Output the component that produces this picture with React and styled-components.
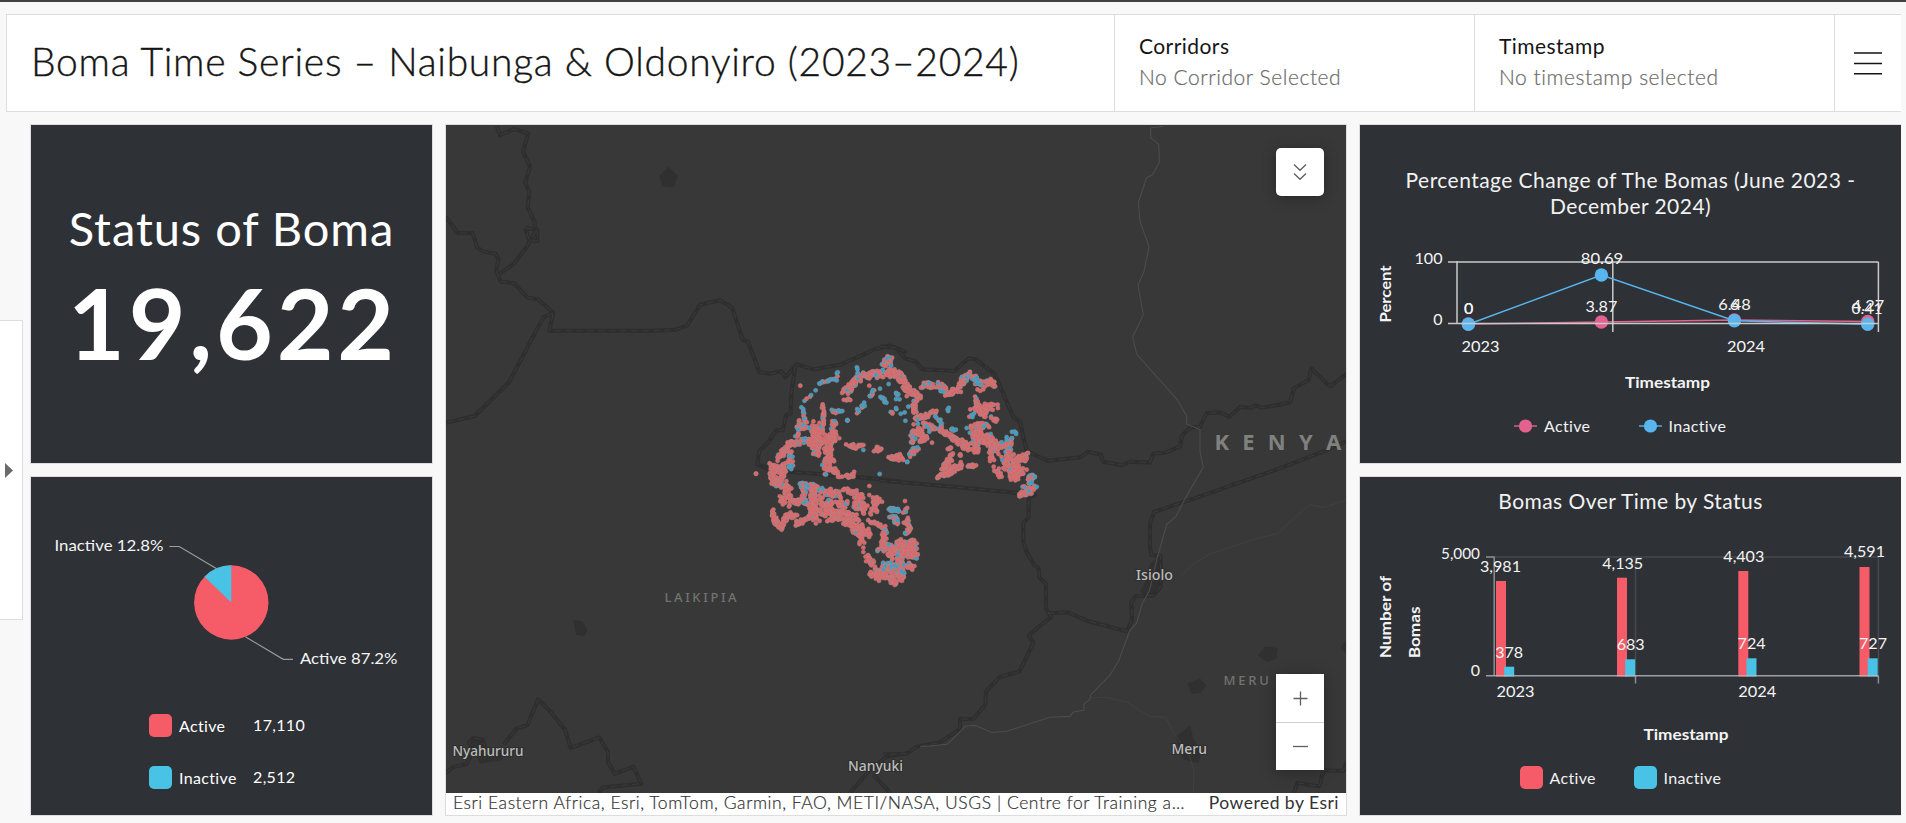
import React from "react";
import styled, { createGlobalStyle } from "styled-components";

const GlobalStyle = createGlobalStyle`
  *, *::before, *::after { box-sizing: border-box; }
  body { margin: 0; overflow: hidden; background: #f8f8f8; }
  svg { display: block; }
`;

const SANS = `Lato, "Open Sans", sans-serif`;
const RED = "#f55c68";
const BLUE = "#48c3e5";
const PINK = "#e3628f";
const SKY = "#58b5ee";

const Page = styled.div`
  height: 823px;
  width: 1906px;
  display: flex;
  flex-direction: column;
  border-top: 2px solid #434141;
  padding: 12px 5px 7px 0;
  font-family: ${SANS};
  background: #f8f8f8;
`;

const Header = styled.header`
  display: flex;
  height: 98px;
  margin-left: 6px;
  background: #fff;
  border: 1px solid #dddddd;
  border-right: 0;
`;

const Title = styled.h1`
  flex: 1;
  margin: 0;
  padding: 21px 0 0 24px;
  font-size: 39px;
  line-height: 50px;
  font-weight: 300;
  letter-spacing: 0.72px;
  white-space: nowrap;
  color: #151515;
  -webkit-text-stroke: 0.35px #151515;
`;

const Selector = styled.div`
  width: 360px;
  padding: 15px 0 0 24px;
  border-left: 1px solid #dddddd;
`;

const SelectorName = styled.div`
  font-size: 21px;
  line-height: 31px;
  color: #151515;
  letter-spacing: 0.45px;
`;

const SelectorValue = styled.div`
  font-size: 21px;
  line-height: 31px;
  font-weight: 300;
  color: #6a6a6a;
  letter-spacing: 0.54px;
  -webkit-text-stroke: 0.2px #6a6a6a;
`;

const MenuButton = styled.button`
  width: 67px;
  padding: 0 0 0 19px;
  border: 0;
  border-left: 1px solid #dddddd;
  background: none;
`;

const Main = styled.main`
  flex: 1;
  display: grid;
  grid-template-columns: 18px 403px 902px 542px;
  column-gap: 12px;
  margin-top: 12px;
  height: 692px;
`;

const DrawerHandle = styled.button`
  width: 23px;
  height: 300px;
  margin-top: 196px;
  padding: 0 0 0 5px;
  border: 1px solid #dddddd;
  border-left: 0;
  background: #fff;
`;

const Column = styled.section`
  display: grid;
  grid-template-rows: 340px 340px;
  row-gap: 12px;
`;

const Panel = styled.article`
  display: flex;
  flex-direction: column;
  background: #2e3136;
  border: 1px solid #dddddd;
  border-right-width: ${(p) => (p.$open ? 0 : "1px")};
  color: #fff;
  overflow: hidden;
`;

const KpiLabel = styled.div`
  margin-top: 73px;
  text-align: center;
  font-size: 47px;
  line-height: 60px;
  letter-spacing: 0.95px;
  white-space: nowrap;
`;

const KpiValue = styled.div`
  margin-top: 5px;
  padding-left: 3px;
  text-align: center;
  font-size: 98px;
  line-height: 118px;
  font-weight: 700;
  letter-spacing: 3.8px;
`;

const PieLegend = styled.div`
  display: grid;
  grid-template-columns: 23px 67px auto;
  grid-auto-rows: 23px;
  column-gap: 7px;
  row-gap: 29px;
  align-items: center;
  margin: 2px 0 0 118px;
  font-size: 16px;
  line-height: 21px;
  letter-spacing: 0.35px;
`;

const LegendValue = styled.span`
  padding-bottom: 3px;
`;

const Swatch = styled.span`
  width: 23px;
  height: 23px;
  border-radius: 5px;
  background: ${(p) => p.$color};
`;

const ChartTitle = styled.h2`
  margin: ${(p) => p.$top} 0 0;
  font-size: 21px;
  line-height: 26px;
  font-weight: 400;
  text-align: center;
  color: #f2f2f2;
  letter-spacing: 0.45px;
`;

const Legend = styled.div`
  display: flex;
  margin: ${(p) => p.$margin};
  font-size: 16px;
  line-height: 23px;
  letter-spacing: 0.35px;
  color: #f2f2f2;
`;

const LegendItem = styled.span`
  display: flex;
  align-items: center;
  gap: 7px;
  width: ${(p) => p.$width};
`;

const MapCard = styled.article`
  position: relative;
  display: flex;
  flex-direction: column;
  border: 1px solid #dddddd;
  background: #fff;
`;

const Attribution = styled.footer`
  display: flex;
  justify-content: space-between;
  height: 22px;
  padding: 0 7px;
  font-size: 17.5px;
  line-height: 20px;
  font-weight: 300;
  color: #323232;
  -webkit-text-stroke: 0.2px #323232;
  white-space: nowrap;
`;

const Sources = styled.span`
  letter-spacing: 0.56px;
`;

const Powered = styled.span`
  font-weight: 400;
  letter-spacing: 0.48px;
  -webkit-text-stroke: 0;
`;

const MapControls = styled.div`
  position: absolute;
  right: 22px;
  top: ${(p) => p.$top};
  display: flex;
  flex-direction: column;
  border-radius: ${(p) => p.$radius || "0"};
  overflow: hidden;
  box-shadow: 0 2px 14px rgba(0, 0, 0, 0.3);
`;

const MapButton = styled.button`
  display: grid;
  place-items: center;
  width: 48px;
  height: 48px;
  padding: 0;
  border: 0;
  background: #fff;
  & + & { border-top: 1px solid #cfcfcf; }
`;

const Plot = styled.svg`
  font-family: ${SANS};
  font-size: 16px;
  fill: #f4f4f4;
  overflow: visible;
  flex: none;
`;

function Label({ x, y, w, anchor = "middle", children, ...rest }) {
  return (
    <text x={x} y={y} textAnchor={anchor} textLength={w} lengthAdjust="spacingAndGlyphs" {...rest}>
      {children}
    </text>
  );
}

/* ---------- basemap ---------- */

const WEST_BORDERS = [
  "170,14 180,34 222,20 265,30 249,70 270,103 256,140 268,160 263,195 284,228 286,250 258,285 220,322 178,343",
  "256,240 292,246 292,270 268,270 256,240",
  "18,216 54,252 98,252 112,285 132,294 166,298 176,310 168,335 182,360 222,364 262,396 294,400 340,430 328,470 636,470 706,468 742,458 780,412 840,402 876,418 908,490 924,494 958,562 990,566 1024,560 1036,574 1052,560 1070,545 1120,556 1200,546 1280,520 1300,512 1350,503 1400,518",
  "340,430 310,440 206,586 104,660 18,675",
  "1066,548 1054,610 1052,654 1038,658 1028,692 1008,692 984,720 958,738 952,768 1000,782 1080,786 1250,796 1380,806",
  "192,1392 230,1357 262,1350 294,1292 330,1318 375,1360 392,1400 478,1377 504,1410 504,1432 524,1458 580,1442 604,1480 490,1488 475,1500",
  "18,1456 40,1443 80,1436 100,1405 86,1388 100,1378 128,1382 136,1400",
  "1230,1500 1290,1450 1340,1420 1400,1412",
  "1300,1460 1350,1500",
];
const EAST_BORDERS = [
  "-30,505 18,508 46,532 76,538 98,556 192,560 236,532 258,534 314,566 370,662 390,674 410,738 472,760 572,752 594,740 632,746 640,762 696,770 720,762 780,764 790,744 826,742 870,728 876,704 900,686 930,684 950,654 990,652 1018,662 1050,640 1082,642 1096,636 1116,642 1200,630 1212,598 1256,580 1264,554 1320,594 1370,566",
  "-30,804 190,818 390,832 434,836 416,842 416,884 400,900 400,940 410,964 432,992 446,1000 448,1020 468,1034 468,1090 484,1108 440,1134 416,1150 430,1166 408,1200 388,1230 330,1242 288,1274 286,1304 250,1336 210,1336 210,1358 150,1388 80,1398 50,1413 -20,1415",
  "472,1100 534,1098 588,1116 710,1140 726,1116 724,1076 736,1062 790,1060 812,1040 812,972 784,970 780,950 780,900 792,874 920,842 1180,774 1310,736 1370,716",
  "1212,1500 1222,1478 1288,1486 1300,1450 1360,1452 1370,1430",
];
const ROADS = [
  "820,14 782,18 782,40 806,54 808,94 788,122 770,128 745,184 750,226 777,282 762,338 744,368 760,434 728,484 740,522 862,624 890,660 890,678 930,690 930,740 940,774 884,846 858,884 830,902 804,970 778,1050 756,1080 740,1122 720,1138 686,1206 660,1238 602,1282 600,1292 582,1302 582,1316 550,1320 540,1330 480,1332 350,1363 306,1366 256,1350 226,1352 172,1392 90,1398",
];
const MINOR_ROADS = [
  "1368,848 1300,864 1258,858 1212,888 1164,922 1106,932 960,968 910,990 872,1018",
  "602,1288 650,1288 710,1298 780,1330 826,1332 856,1372 900,1420 912,1450 910,1500",
];
const LAKES_WEST = [
  "658,125 685,104 714,125 700,150 668,148",
  "400,1114 428,1118 442,1138 432,1151 408,1148",
  "90,1385 120,1378 150,1405 200,1408 185,1428 120,1435",
];
const LAKES_EAST = [
  "1104,1194 1126,1174 1164,1178 1160,1200 1132,1210",
  "892,1256 930,1246 950,1262 932,1278 906,1280",
  "856,1376 900,1350 910,1380 936,1412 925,1434 880,1426",
  "1352,1176 1370,1158 1370,1192",
  "780,990 810,970 812,1050 780,1062 750,1052 765,1030",
];

function Borders({ lines, ...rest }) {
  return (
    <g fill="none" strokeLinejoin="round" {...rest}>
      {lines.map((d) => (
        <polyline key={d} points={d} stroke="#2d2e2d" strokeWidth="4" vectorEffect="non-scaling-stroke" />
      ))}
      {lines.map((d) => (
        <polyline key={d} points={d} stroke="#3b3c3b" strokeWidth="0.9" strokeDasharray="7 4" vectorEffect="non-scaling-stroke" />
      ))}
    </g>
  );
}

/* Boma clusters: [track, spread, dots per 100 units, share of inactive] */
const WEST_CLUSTERS = [
  ["181,137 181,137", 0, 1, 0], ["48,401 48,401", 2, 2, 0],
  ["236,131 262,124 288,118 295,96", 4, 22, 0.7],
  ["195,186 212,168 226,155", 4, 12, 0.5],
  ["182,204 192,225 200,250", 6, 22, 0.6],
  ["172,262 205,258", 7, 40, 0.7], ["180,240 170,290", 5, 30, 0.3],
  ["246,194 250,225 246,280", 4, 26, 0.08],
  ["228,255 232,345", 15, 65, 0.06], ["200,300 240,330", 13, 60, 0.03],
  ["280,244 282,300", 8, 45, 0.1], ["246,285 285,300", 14, 60, 0],
  ["262,300 270,370", 13, 55, 0.05], ["252,370 256,398", 7, 35, 0.35],
  ["265,380 303,406", 9, 45, 0], ["318,410 345,402", 9, 45, 0.08],
  ["195,300 148,315", 10, 45, 0.25], ["155,305 128,340 115,355", 9, 45, 0.12],
  ["150,330 153,385", 8, 40, 0.2],
  ["100,375 102,435", 13, 75, 0], ["128,375 128,425", 11, 65, 0],
  ["105,430 150,445", 8, 50, 0.06], ["178,437 228,437", 8, 55, 0.55],
  ["125,470 125,490", 6, 45, 0.05], ["140,445 148,488", 12, 55, 0.02],
  ["160,482 200,488", 9, 60, 0.12], ["190,445 192,488", 7, 45, 0.35],
  ["222,440 215,530", 10, 65, 0.04], ["240,450 300,462", 12, 55, 0.15],
  ["230,480 230,535", 20, 85, 0.02], ["255,490 275,535", 20, 90, 0.02],
  ["290,490 320,495", 11, 60, 0.02], ["280,520 345,535", 14, 80, 0.02],
  ["320,452 360,468 362,505", 12, 65, 0.03], ["345,490 385,515", 14, 70, 0.05],
  ["98,514 108,550 128,565", 7, 50, 0], ["120,555 150,522 165,530", 8, 50, 0],
  ["165,552 206,536", 7, 45, 0], ["312,550 345,560", 6, 35, 0],
  ["350,565 365,600", 15, 80, 0.02], ["355,560 388,585", 13, 60, 0],
  ["388,438 388,465", 0, 7, 0], ["400,480 420,482", 9, 50, 0], ["405,485 406,514", 7, 45, 0],
  ["388,542 425,560", 4, 32, 0], ["434,562 432,610", 7, 45, 0.2],
  ["412,630 440,628", 5, 35, 0.35], ["430,610 475,640", 13, 70, 0.05],
  ["370,623 370,636", 0, 14, 0], ["380,652 400,672", 9, 50, 0.15],
  ["400,690 405,720", 15, 80, 0.04], ["425,680 470,680", 13, 70, 0.45],
  ["420,700 465,708", 13, 70, 0.15], ["445,715 470,732", 7, 45, 0],
  ["326,316 368,320", 8, 40, 0.02], ["370,330 370,330", 0, 1, 1],
  ["403,330 422,322", 8, 50, 0.02], ["450,352 480,350", 5, 35, 0.2],
  ["419,402 419,402", 0, 1, 1], ["321,242 321,242", 3, 3, 1],
  ["278,214 302,214", 6, 40, 0.6], ["350,216 375,192", 6, 35, 0.9],
  ["388,170 402,150", 4, 32, 0.7], ["388,137 388,137", 0, 1, 0],
  ["420,146 420,146", 0, 1, 1], ["424,168 438,190", 4, 26, 0.9],
  ["450,218 460,220", 3, 30, 0.4], ["446,132 446,132", 0, 1, 1],
  ["314,180 330,178", 3, 35, 0.1], ["315,158 355,116", 10, 55, 0.25],
  ["350,88 355,108", 6, 25, 1], ["350,115 400,100", 12, 60, 0.3],
  ["395,105 440,100", 12, 65, 0.15], ["425,80 450,56", 11, 60, 0.55],
  ["450,92 480,112", 12, 65, 0.06],
  ["448,508 476,510", 5, 40, 0.95], ["455,528 475,550", 8, 35, 0.5],
  ["475,600 482,720", 10, 42, 0.2],
];
const EAST_CLUSTERS = [
  ["0,60 0,75", 4, 35, 0.4], ["0,105 24,98", 12, 65, 0.02], ["30,110 55,155", 11, 60, 0.03],
  ["55,160 90,165", 12, 70, 0.1], ["95,138 132,136", 10, 65, 0.08],
  ["78,170 72,195 80,235", 7, 45, 0.05], ["80,238 135,215", 7, 50, 0.08],
  ["140,236 154,250", 8, 40, 0.8], ["172,212 176,204", 3, 30, 1],
  ["14,158 28,178", 8, 26, 0.95], ["8,206 50,230", 12, 8, 0.95],
  ["55,200 55,200", 0, 1, 1], ["18,204 18,204", 0, 1, 1],
  ["148,134 165,155", 11, 60, 0.6], ["170,155 205,155", 12, 65, 0.15],
  ["210,138 235,102", 10, 60, 0.05], ["235,110 262,118", 8, 55, 0.3],
  ["262,125 270,145", 10, 55, 0.7], ["285,132 300,120 312,140", 8, 40, 0.2],
  ["256,174 260,195", 5, 40, 0.5], ["250,205 312,200", 13, 70, 0.03],
  ["265,215 290,218", 15, 75, 0.03], ["242,232 252,226", 5, 35, 0.8],
  ["306,232 322,244", 5, 40, 0.4], ["184,266 194,268", 4, 50, 0.9],
  ["118,275 118,275", 0, 1, 1], ["137,266 137,266", 0, 1, 1], ["230,264 230,264", 0, 1, 1],
  ["302,282 302,282", 0, 1, 1],
  ["66,280 72,310", 8, 45, 0.6], ["80,265 105,305", 14, 85, 0.02],
  ["100,255 155,268", 7, 45, 0.15], ["155,270 205,305", 7, 45, 0],
  ["205,305 240,320", 13, 80, 0], ["250,262 290,260", 13, 70, 0.2],
  ["250,275 260,330", 11, 65, 0.06], ["265,290 310,308", 16, 85, 0.03],
  ["305,305 325,330", 13, 65, 0.1], ["303,325 306,360", 8, 45, 0.1],
  ["372,276 372,282", 6, 60, 0.8], ["358,290 352,340", 10, 60, 0.25],
  ["345,350 350,385", 11, 60, 0.3], ["360,350 375,415", 15, 85, 0.03],
  ["375,365 410,350", 12, 65, 0], ["380,385 400,395", 13, 70, 0],
  ["325,315 340,308", 7, 45, 0.1], ["320,390 330,412", 9, 55, 0],
  ["311,380 311,380", 0, 1, 0], ["126,308 126,308", 0, 1, 0],
  ["175,324 185,326", 5, 50, 0], ["210,346 210,346", 3, 3, 0],
  ["188,346 162,385", 8, 60, 0], ["145,408 175,402", 9, 65, 0], ["165,400 215,375", 10, 65, 0],
  ["236,378 256,376", 4, 45, 0], ["414,340 414,340", 2, 2, 0],
  ["0,353 34,358", 6, 45, 0.1], ["28,345 30,350", 5, 50, 0], ["50,366 54,366", 2, 50, 1],
  ["60,345 80,322", 8, 50, 0.4],
  ["412,405 440,412", 7, 45, 0.85], ["415,415 432,440", 9, 50, 0.7],
  ["388,464 420,455", 7, 55, 0.03], ["405,440 425,450", 7, 50, 0.15],
  ["45,483 45,483", 0, 1, 0], ["48,506 42,518", 4, 40, 0.3],
  ["0,510 25,510", 4, 45, 1], ["8,528 28,550", 7, 45, 0.6],
  ["48,540 55,570 48,585", 8, 50, 0.08], ["35,600 40,650", 13, 80, 0.05],
  ["65,605 70,650", 14, 85, 0.08], ["0,620 5,650", 10, 65, 0.05],
  ["20,630 50,640", 13, 70, 0.15], ["45,672 68,685", 10, 60, 0.05],
  ["5,670 20,700", 9, 50, 0.7], ["30,690 40,700", 6, 40, 0.4], ["4,718 16,732", 7, 50, 0],
];

function scatter(clusters, seed) {
  let s = seed;
  const rnd = () => {
    s = (s * 1664525 + 1013904223) % 4294967296;
    return s / 4294967296;
  };
  const dots = [];
  clusters.forEach(([track, spread, density, inactive]) => {
    const pts = track.split(" ").map((p) => p.split(",").map(Number));
    for (let i = 1; i < pts.length; i += 1) {
      const [ax, ay] = pts[i - 1];
      const [bx, by] = pts[i];
      const len = Math.hypot(bx - ax, by - ay);
      const n = Math.max(1, Math.round(len === 0 ? density : (len * density) / 100));
      for (let k = 0; k < n; k += 1) {
        const t = n === 1 ? 0.5 : k / (n - 1);
        const a = rnd() * Math.PI * 2;
        const r = Math.sqrt(rnd()) * spread * 1.08;
        dots.push({ x: ax + (bx - ax) * t + Math.cos(a) * r, y: ay + (by - ay) * t + Math.sin(a) * r, off: rnd() < inactive });
      }
    }
  });
  return dots;
}

const WEST_DOTS = scatter(WEST_CLUSTERS, 7);
const EAST_DOTS = scatter(EAST_CLUSTERS, 23);

function Bomas({ dots, transform }) {
  return (
    <g transform={transform} stroke="#a58e90" strokeOpacity="0.7" strokeWidth="1.9">
      {dots.map((d, i) => (
        <circle key={i} cx={d.x.toFixed(1)} cy={d.y.toFixed(1)} r="6.3" fill={d.off ? "#32a0cb" : "#e36365"} />
      ))}
    </g>
  );
}

const MapSvg = styled.svg`
  font-family: "Noto Sans", "Open Sans", sans-serif;
  background: #373837;
  flex: none;
  overflow: hidden;
`;

const W = "translate(-6 -5) scale(0.33333 0.44843)";
const E = "translate(444 -5) scale(0.33333 0.44843)";

function Basemap() {
  return (
    <MapSvg width="900" height="668" viewBox="0 0 900 668">
      <g fill="#2f302f">
        <g transform={W}>{LAKES_WEST.map((d) => <polygon key={d} points={d} />)}</g>
        <g transform={E}>{LAKES_EAST.map((d) => <polygon key={d} points={d} />)}</g>
      </g>
      <Borders lines={WEST_BORDERS} transform={W} />
      <Borders lines={EAST_BORDERS} transform={E} />
      <g transform={E} fill="none" strokeLinejoin="round">
        {ROADS.map((d) => <polyline key={d} points={d} stroke="#4b4c4b" strokeWidth="1.1" vectorEffect="non-scaling-stroke" />)}
        {MINOR_ROADS.map((d) => <polyline key={d} points={d} stroke="#424342" strokeWidth="0.8" vectorEffect="non-scaling-stroke" />)}
      </g>
      <Bomas dots={WEST_DOTS} transform="translate(294 215) scale(0.33333)" />
      <Bomas dots={EAST_DOTS} transform="translate(444 215) scale(0.33333)" />
      <g fill="#bdbdbb" fontSize="14" fontWeight="500" stroke="#2d2e2d" strokeWidth="2" paintOrder="stroke">
        <Label anchor="start" x="6.5" y="630.5" w="71">Nyahururu</Label>
        <Label anchor="start" x="402" y="646" w="55">Nanyuki</Label>
        <Label anchor="start" x="690" y="455" w="37">Isiolo</Label>
        <Label anchor="start" x="725.5" y="629" w="35.5">Meru</Label>
      </g>
      <g fill="#727371" fontSize="13" fontWeight="500">
        <text x="218.5" y="476.8" letterSpacing="2.6">LAIKIPIA</text>
        <text x="777.5" y="560.3" letterSpacing="2.8">MERU</text>
      </g>
      <text x="768.5" y="324.5" fontSize="22" fontWeight="700" letterSpacing="13.2" fill="#80817f">
        KENY<tspan letterSpacing="0">A</tspan>
      </text>
    </MapSvg>
  );
}

/* ---------- charts ---------- */

function PieChart() {
  const cx = 200.3;
  const cy = 125.5;
  const r = 37.2;
  const a = -0.128 * Math.PI * 2;
  const x = cx + r * Math.sin(a);
  const y = cy - r * Math.cos(a);
  return (
    <Plot width="401" height="235">
      <circle cx={cx} cy={cy} r={r} fill={RED} />
      <path d={`M${cx} ${cy}L${x} ${y}A${r} ${r} 0 0 1 ${cx} ${cy - r}Z`} fill={BLUE} />
      <g fill="none" stroke="#9a9c9e" strokeWidth="1.2">
        <path d="M138.3 69.5h10l37.4 22.3" />
        <path d="M214.7 160l37.6 22.3h9.7" />
      </g>
      <Label anchor="start" x="23.5" y="74" w="109">Inactive 12.8%</Label>
      <Label anchor="start" x="269" y="187" w="97.5">Active 87.2%</Label>
    </Plot>
  );
}

const RATE_X = [108.4, 241.4, 374.4, 507.7];
const ACTIVE_Y = [199, 197, 195, 196.5];
const INACTIVE_Y = [199.3, 150, 195.7, 199.3];
const join = (ys) => RATE_X.map((x, i) => `${x},${ys[i]}`).join(" ");

function RateChart() {
  return (
    <Plot width="541" height="195" viewBox="0 94 541 195">
      <polyline points={join(ACTIVE_Y)} fill="none" stroke={PINK} strokeWidth="1.5" />
      {RATE_X.map((x, i) => <circle key={x} cx={x} cy={ACTIVE_Y[i]} r="6.7" fill={PINK} />)}
      <g stroke="#c9c9c9" strokeWidth="1.5" fill="none">
        <path d="M88 137H518.5M97 136V199M252.8 137V207M518.4 137V207" />
      </g>
      <polyline points={join(INACTIVE_Y)} fill="none" stroke={SKY} strokeWidth="1.5" />
      {RATE_X.map((x, i) => <circle key={x} cx={x} cy={INACTIVE_Y[i]} r="6.7" fill={SKY} />)}
      <path d="M88 198.4H518.5" stroke="#c9c9c9" strokeWidth="1.5" />
      <Label anchor="end" x="82.5" y="138.7" w="28">100</Label>
      <Label anchor="end" x="82.5" y="199.7">0</Label>
      <Label x="108.6" y="189.3">0</Label>
      <Label x="108.6" y="189.3">0</Label>
      <Label x="242" y="138.7" w="42.5">80.69</Label>
      <Label x="241.4" y="187.3" w="32">3.87</Label>
      <Label x="374.5" y="185.3" w="32.5">6.48</Label>
      <Label x="374.5" y="185.3">6</Label>
      <Label x="508" y="185.5" w="32.5">4.27</Label>
      <Label x="507" y="189.3" w="31">0.41</Label>
      <Label anchor="start" x="101.5" y="227" w="38">2023</Label>
      <Label anchor="start" x="367" y="227" w="38">2024</Label>
      <Label anchor="start" x="265" y="263.3" w="85" fontWeight="700">Timestamp</Label>
      <Label anchor="start" x="0" y="0" w="57" fontWeight="700" transform="translate(31 197.5) rotate(-90)">Percent</Label>
    </Plot>
  );
}

const BARS = [
  { x: 136, active: "3,981", top: 104, lx: 140.5, ly: 95.3, inactive: "378", itop: 189.7, ix: 149.2, iy: 180.7 },
  { x: 257, active: "4,135", top: 100.7, lx: 262.7, ly: 91.7, inactive: "683", itop: 182.3, ix: 270.7, iy: 173.3 },
  { x: 378.3, active: "4,403", top: 94, lx: 383.8, ly: 85.3, inactive: "724", itop: 181.3, ix: 391.6, iy: 172 },
  { x: 499.5, active: "4,591", top: 90, lx: 504.5, ly: 80, inactive: "727", itop: 181.3, ix: 513, iy: 172 },
];

function StatusChart() {
  return (
    <Plot width="541" height="233" viewBox="0 37 541 233">
      <g fill="none">
        <path d="M126 80H518.5M275.5 80V199M518.4 80V199" stroke="#46494d" strokeWidth="1.5" />
        <path d="M126 80h8M134.2 79.5V199M275.5 199v7.5M518.4 199v7.5" stroke="#8b8d90" strokeWidth="1.5" />
      </g>
      {BARS.map((b) => (
        <g key={b.active}>
          <rect x={b.x} y={b.top} width="10" height={199.5 - b.top} fill={RED} />
          <rect x={b.x + 8.2} y={b.itop} width="10" height={199.5 - b.itop} fill={BLUE} />
        </g>
      ))}
      <path d="M126 198.7H518.5" stroke="#b9bbbd" strokeOpacity="0.8" strokeWidth="1.5" />
      {BARS.map((b) => (
        <g key={b.active}>
          <Label x={b.lx} y={b.ly} w="41">{b.active}</Label>
          <Label x={b.ix} y={b.iy} w="28">{b.inactive}</Label>
        </g>
      ))}
      <Label anchor="end" x="120" y="81.7" w="39">5,000</Label>
      <Label anchor="end" x="120" y="199.3">0</Label>
      <Label anchor="start" x="136.5" y="220" w="38">2023</Label>
      <Label anchor="start" x="378.3" y="220" w="38">2024</Label>
      <Label anchor="start" x="283.5" y="263" w="85" fontWeight="700">Timestamp</Label>
      <Label anchor="start" w="82.5" fontWeight="700" transform="translate(31 181.3) rotate(-90)">Number of</Label>
      <Label anchor="start" w="52" fontWeight="700" transform="translate(59.5 181.3) rotate(-90)">Bomas</Label>
    </Plot>
  );
}

function LineMarker({ color }) {
  return (
    <svg width="23" height="14" viewBox="0 0 23 14">
      <path d="M0 7H23" stroke={color} strokeWidth="1.4" />
      <circle cx="11.5" cy="7" r="6.6" fill={color} />
    </svg>
  );
}

export default function App() {
  return (
    <>
      <GlobalStyle />
      <Page>
        <Header>
          <Title>Boma Time Series – Naibunga &amp; Oldonyiro (2023–2024)</Title>
          <Selector>
            <SelectorName>Corridors</SelectorName>
            <SelectorValue>No Corridor Selected</SelectorValue>
          </Selector>
          <Selector>
            <SelectorName>Timestamp</SelectorName>
            <SelectorValue>No timestamp selected</SelectorValue>
          </Selector>
          <MenuButton aria-label="Menu">
            <svg width="28" height="24" viewBox="0 0 28 24" stroke="#151515" strokeWidth="1.5">
              <path d="M0 2H28M0 12.4H28M0 22.8H28" />
            </svg>
          </MenuButton>
        </Header>
        <Main>
          <DrawerHandle aria-label="Open side panel">
            <svg width="8" height="15" viewBox="0 0 8 15">
              <path d="M0 0L8 7.5L0 15Z" fill="#6a6a6a" />
            </svg>
          </DrawerHandle>
          <Column>
            <Panel>
              <KpiLabel>Status of Boma</KpiLabel>
              <KpiValue>19,622</KpiValue>
            </Panel>
            <Panel>
              <PieChart />
              <PieLegend>
                <Swatch $color={RED} />
                <span>Active</span>
                <LegendValue>17,110</LegendValue>
                <Swatch $color={BLUE} />
                <span>Inactive</span>
                <LegendValue>2,512</LegendValue>
              </PieLegend>
            </Panel>
          </Column>
          <MapCard>
            <Basemap />
            <Attribution>
              <Sources>Esri Eastern Africa, Esri, TomTom, Garmin, FAO, METI/NASA, USGS | Centre for Training a…</Sources>
              <Powered>Powered by Esri</Powered>
            </Attribution>
            <MapControls $top="23px" $radius="5px">
              <MapButton aria-label="Expand">
                <svg width="14" height="18" viewBox="0 0 14 18" fill="none" stroke="#5f5f5f" strokeWidth="1.3">
                  <path d="M1 1.5L7 7.3L13 1.5M1 10.5L7 16.3L13 10.5" />
                </svg>
              </MapButton>
            </MapControls>
            <MapControls $top="549px">
              <MapButton aria-label="Zoom in">
                <svg width="15" height="15" viewBox="0 0 15 15" stroke="#5f5f5f" strokeWidth="1.3">
                  <path d="M0.5 7.5h14M7.5 0.5v14" />
                </svg>
              </MapButton>
              <MapButton aria-label="Zoom out">
                <svg width="15" height="15" viewBox="0 0 15 15" stroke="#5f5f5f" strokeWidth="1.3">
                  <path d="M0 7.5h15" />
                </svg>
              </MapButton>
            </MapControls>
          </MapCard>
          <Column>
            <Panel $open>
              <ChartTitle $top="42px">
                Percentage Change of The Bomas (June 2023 -
                <br />
                December 2024)
              </ChartTitle>
              <RateChart />
              <Legend $margin="0 0 0 154px">
                <LegendItem $width="124.5px"><LineMarker color={PINK} />Active</LegendItem>
                <LegendItem><LineMarker color={SKY} />Inactive</LegendItem>
              </Legend>
            </Panel>
            <Panel $open>
              <ChartTitle $top="11px">Bomas Over Time by Status</ChartTitle>
              <StatusChart />
              <Legend $margin="19px 0 0 159.5px">
                <LegendItem $width="114px"><Swatch $color={RED} />Active</LegendItem>
                <LegendItem><Swatch $color={BLUE} />Inactive</LegendItem>
              </Legend>
            </Panel>
          </Column>
        </Main>
      </Page>
    </>
  );
}
